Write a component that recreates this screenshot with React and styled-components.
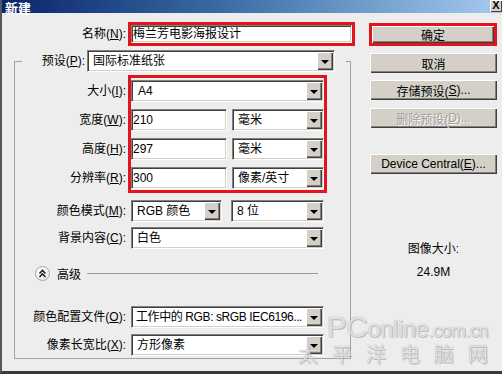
import styled, { createGlobalStyle } from 'styled-components';

const GlobalStyle = createGlobalStyle`
  html, body { margin: 0; padding: 0; background: #ededed; }
  body {
    font-family: "Liberation Sans", "Noto Sans CJK SC", sans-serif;
    font-size: 12px;
    color: #000;
  }
  u { text-decoration: underline; text-underline-offset: 1px; }
`;

const Window = styled.div`
  position: relative;
  width: 502px;
  height: 374px;
  box-sizing: border-box;
  background: #ededed;
  border-left: 2px solid #55585c;
  border-bottom: 3px solid #3a3a3a;
  overflow: hidden;
  display: flex;
  flex-direction: column;
`;

const TitleBar = styled.div`
  height: 13px;
  flex: none;
  display: flex;
  align-items: flex-end;
  justify-content: space-between;
  background: linear-gradient(to right, #0a246a 0%, #3a6ea5 45%, #a6caf0 100%);
`;

const TitleText = styled.span`
  color: #fff;
  font-weight: bold;
  font-size: 13px;
  line-height: 13px;
  padding-left: 3px;
  margin-bottom: -2px;
`;

const CloseBtn = styled.span`
  width: 12px;
  height: 12px;
  margin-bottom: 1px;
  background: #d4d0c8;
  box-shadow: inset 1px 1px #fff, inset -1px -1px #404040;
  font-size: 11px;
  font-weight: bold;
  line-height: 11px;
  text-align: center;
  color: #000;
  font-family: "Liberation Sans", sans-serif;
`;

const Body = styled.div`
  flex: 1;
  display: flex;
  padding-top: 9px;
`;

const LeftCol = styled.div`
  width: 367px;
  flex: none;
  display: flex;
  flex-direction: column;
`;

const RightCol = styled.div`
  width: 128px;
  flex: none;
  display: flex;
  flex-direction: column;
  align-items: flex-end;
`;

const NameRow = styled.div`
  display: flex;
  align-items: center;
`;

const Label = styled.label`
  width: ${p => p.$w || 111}px;
  flex: none;
  text-align: right;
  white-space: nowrap;
  line-height: 22px;
  margin-right: ${p => p.$gap || 0}px;
`;

const RedFrame = styled.div`
  border: 3px solid #e3141b;
  box-sizing: border-box;
  width: ${p => p.$w}px;
  padding: ${p => p.$pad || '0'};
`;

const Sunken = styled.div`
  box-sizing: border-box;
  height: ${p => p.$h || 22}px;
  width: ${p => (p.$w ? `${p.$w}px` : '100%')};
  flex: none;
  display: flex;
  align-items: center;
  background: #fff;
  border: 1px solid;
  border-color: #808080 #fff #fff #808080;
  box-shadow: inset 1px 1px 0 #404040, inset -1px -1px 0 #d4d0c8;
`;

const FieldText = styled.span`
  flex: 1;
  min-width: 0;
  padding-left: ${p => p.$pad ?? 5}px;
  white-space: nowrap;
  overflow: hidden;
  line-height: 18px;
  letter-spacing: ${p => (p.$tight ? '-0.4px' : 'normal')};
`;

const ArrowBtn = styled.span`
  width: 16px;
  height: 18px;
  flex: none;
  margin-right: 1px;
  box-sizing: border-box;
  background: #d4d0c8;
  box-shadow: inset 1px 1px 0 #fff, inset -1px -1px 0 #404040, inset -2px -2px 0 #808080;
  display: flex;
  align-items: center;
  justify-content: center;
  &::after {
    content: '';
    width: 0;
    height: 0;
    border-left: 4px solid transparent;
    border-right: 4px solid transparent;
    border-top: 4px solid #000;
    margin-top: 1px;
  }
`;

const Group = styled.fieldset`
  margin: 4px 0 0 12px;
  width: 337px;
  box-sizing: border-box;
  border: 1px solid #a3a3a3;
  padding: 3px 0 2px 0;
  min-width: 0;
`;

const Legend = styled.legend`
  margin-left: 7px;
  padding: 0 11px 0 13px;
  display: flex;
  align-items: center;
  height: 22px;
`;

const SizeBlock = styled.div`
  display: flex;
  align-items: flex-start;
`;

const LabelStack = styled.div`
  display: flex;
  flex-direction: column;
  gap: 7px;
  padding-top: 5px;
  margin-right: 2px;
`;

const FieldStack = styled.div`
  display: flex;
  flex-direction: column;
  gap: 7px;
`;

const Row = styled.div`
  display: flex;
  align-items: center;
  margin-top: ${p => p.$mt || 0}px;
`;

const FieldRow = styled.div`
  display: flex;
  align-items: center;
  gap: ${p => p.$gap || 5}px;
`;

const AdvRow = styled.div`
  display: flex;
  align-items: center;
  height: 16px;
  margin-top: 16px;
  padding-left: 20px;
`;

const AdvIcon = styled.span`
  width: 15px;
  height: 15px;
  box-sizing: border-box;
  border-radius: 50%;
  border: 1px solid #a8a8a8;
  background: radial-gradient(circle at 40% 35%, #ffffff 0%, #f2f2f2 55%, #d6d6d6 100%);
  display: flex;
  align-items: center;
  justify-content: center;
`;

const AdvText = styled.span`
  margin-left: 7px;
`;

const AdvLine = styled.span`
  flex: 1;
  height: 1px;
  background: #9a9a9a;
  margin: 0 32px 0 6px;
`;

const Button = styled.div`
  box-sizing: border-box;
  width: ${p => p.$w || 127}px;
  height: ${p => p.$h || 20}px;
  margin-top: ${p => p.$mt || 0}px;
  background: #d4d0c8;
  box-shadow: inset 1px 1px 0 #fff, inset -1px -1px 0 #404040, inset -2px -2px 0 #808080;
  display: flex;
  align-items: center;
  justify-content: center;
  white-space: nowrap;
  color: ${p => (p.$disabled ? '#a09d96' : '#000')};
  text-shadow: ${p => (p.$disabled ? '1px 1px 0 #fff' : 'none')};
`;

const OkFrame = styled.div`
  border: 3px solid #e3141b;
  box-sizing: border-box;
  width: 128px;
  height: 23px;
  margin-top: 1px;
`;

const Info = styled.div`
  width: 127px;
  text-align: center;
  line-height: 16px;
  margin-top: ${p => p.$mt || 0}px;
`;

const Watermark = styled.div`
  position: absolute;
  right: 14px;
  bottom: 4px;
  display: flex;
  flex-direction: column;
  align-items: flex-end;
  color: rgba(255, 255, 255, 0.72);
  text-shadow: 0 0 1px rgba(90, 90, 90, 0.6), 1px 1px 0 rgba(120, 120, 120, 0.35);
  font-family: "Liberation Sans", "Noto Sans CJK SC", sans-serif;
  pointer-events: none;
`;

const WmTop = styled.div`
  font-size: 24px;
  line-height: 24px;
  letter-spacing: -0.5px;
  & b { font-size: 30px; font-weight: normal; }
  & small { font-size: 18px; }
`;

const WmBottom = styled.div`
  font-size: 20px;
  line-height: 24px;
  letter-spacing: 14px;
  margin-right: -14px;
`;

const Select = ({ w, text, pad, tight }) => (
  <Sunken $w={w}>
    <FieldText $pad={pad} $tight={tight}>{text}</FieldText>
    <ArrowBtn />
  </Sunken>
);

const Input = ({ w, text, h = 22 }) => (
  <Sunken $w={w} $h={h}>
    <FieldText $pad={1}>{text}</FieldText>
  </Sunken>
);

const Chevrons = () => (
  <svg width="9" height="9" viewBox="0 0 9 9">
    <path d="M1.5 4.5 L4.5 1.5 L7.5 4.5 M1.5 8 L4.5 5 L7.5 8" fill="none" stroke="#222" strokeWidth="1.6" />
  </svg>
);

export default function App() {
  return (
    <>
      <GlobalStyle />
      <Window>
        <TitleBar>
          <TitleText>新建</TitleText>
          <CloseBtn>X</CloseBtn>
        </TitleBar>
        <Body>
          <LeftCol>
            <NameRow>
              <Label $w={124} $gap={2}>名称(<u>N</u>):</Label>
              <RedFrame $w={227}>
                <Input h={18} text="梅兰芳电影海报设计" />
              </RedFrame>
            </NameRow>
            <Group>
              <Legend>
                <Label $w={50} $gap={2}>预设(<u>P</u>):</Label>
                <Select w={248} text="国际标准纸张" />
              </Legend>
              <SizeBlock>
                <LabelStack>
                  <Label>大小(<u>I</u>):</Label>
                  <Label>宽度(<u>W</u>):</Label>
                  <Label>高度(<u>H</u>):</Label>
                  <Label>分辨率(<u>R</u>):</Label>
                </LabelStack>
                <RedFrame $w={199} $pad="2px 0 1px 0">
                  <FieldStack>
                    <Select text="A4" pad={6} />
                    <FieldRow>
                      <Input w={96} text="210" />
                      <Select w={92} text="毫米" />
                    </FieldRow>
                    <FieldRow>
                      <Input w={96} text="297" />
                      <Select w={92} text="毫米" />
                    </FieldRow>
                    <FieldRow>
                      <Input w={96} text="300" />
                      <Select w={92} text="像素/英寸" />
                    </FieldRow>
                  </FieldStack>
                </RedFrame>
              </SizeBlock>
              <Row $mt={7}>
                <Label $gap={5}>颜色模式(<u>M</u>):</Label>
                <FieldRow $gap={9}>
                  <Select w={91} text="RGB 颜色" />
                  <Select w={93} text="8 位" />
                </FieldRow>
              </Row>
              <Row $mt={5}>
                <Label $gap={5}>背景内容(<u>C</u>):</Label>
                <Select w={193} text="白色" />
              </Row>
              <AdvRow>
                <AdvIcon><Chevrons /></AdvIcon>
                <AdvText>高级</AdvText>
                <AdvLine />
              </AdvRow>
              <Row $mt={25}>
                <Label $gap={5}>颜色配置文件(<u>O</u>):</Label>
                <Select w={193} pad={4} tight text="工作中的 RGB: sRGB IEC6196..." />
              </Row>
              <Row $mt={6}>
                <Label $gap={5}>像素长宽比(<u>X</u>):</Label>
                <Select w={193} text="方形像素" />
              </Row>
            </Group>
          </LeftCol>
          <RightCol>
            <OkFrame>
              <Button $w={122} $h={17}>确定</Button>
            </OkFrame>
            <Button $mt={7}>取消</Button>
            <Button $mt={7}>存储预设(<u>S</u>)...</Button>
            <Button $mt={8} $disabled>删除预设(<u>D</u>)...</Button>
            <Button $mt={26}>Device Central(<u>E</u>)...</Button>
            <Info $mt={67}>图像大小:</Info>
            <Info $mt={7}>24.9M</Info>
          </RightCol>
        </Body>
        <Watermark>
          <WmTop><b>PC</b>online<small>.com.cn</small></WmTop>
          <WmBottom>太平洋电脑网</WmBottom>
        </Watermark>
      </Window>
    </>
  );
}
